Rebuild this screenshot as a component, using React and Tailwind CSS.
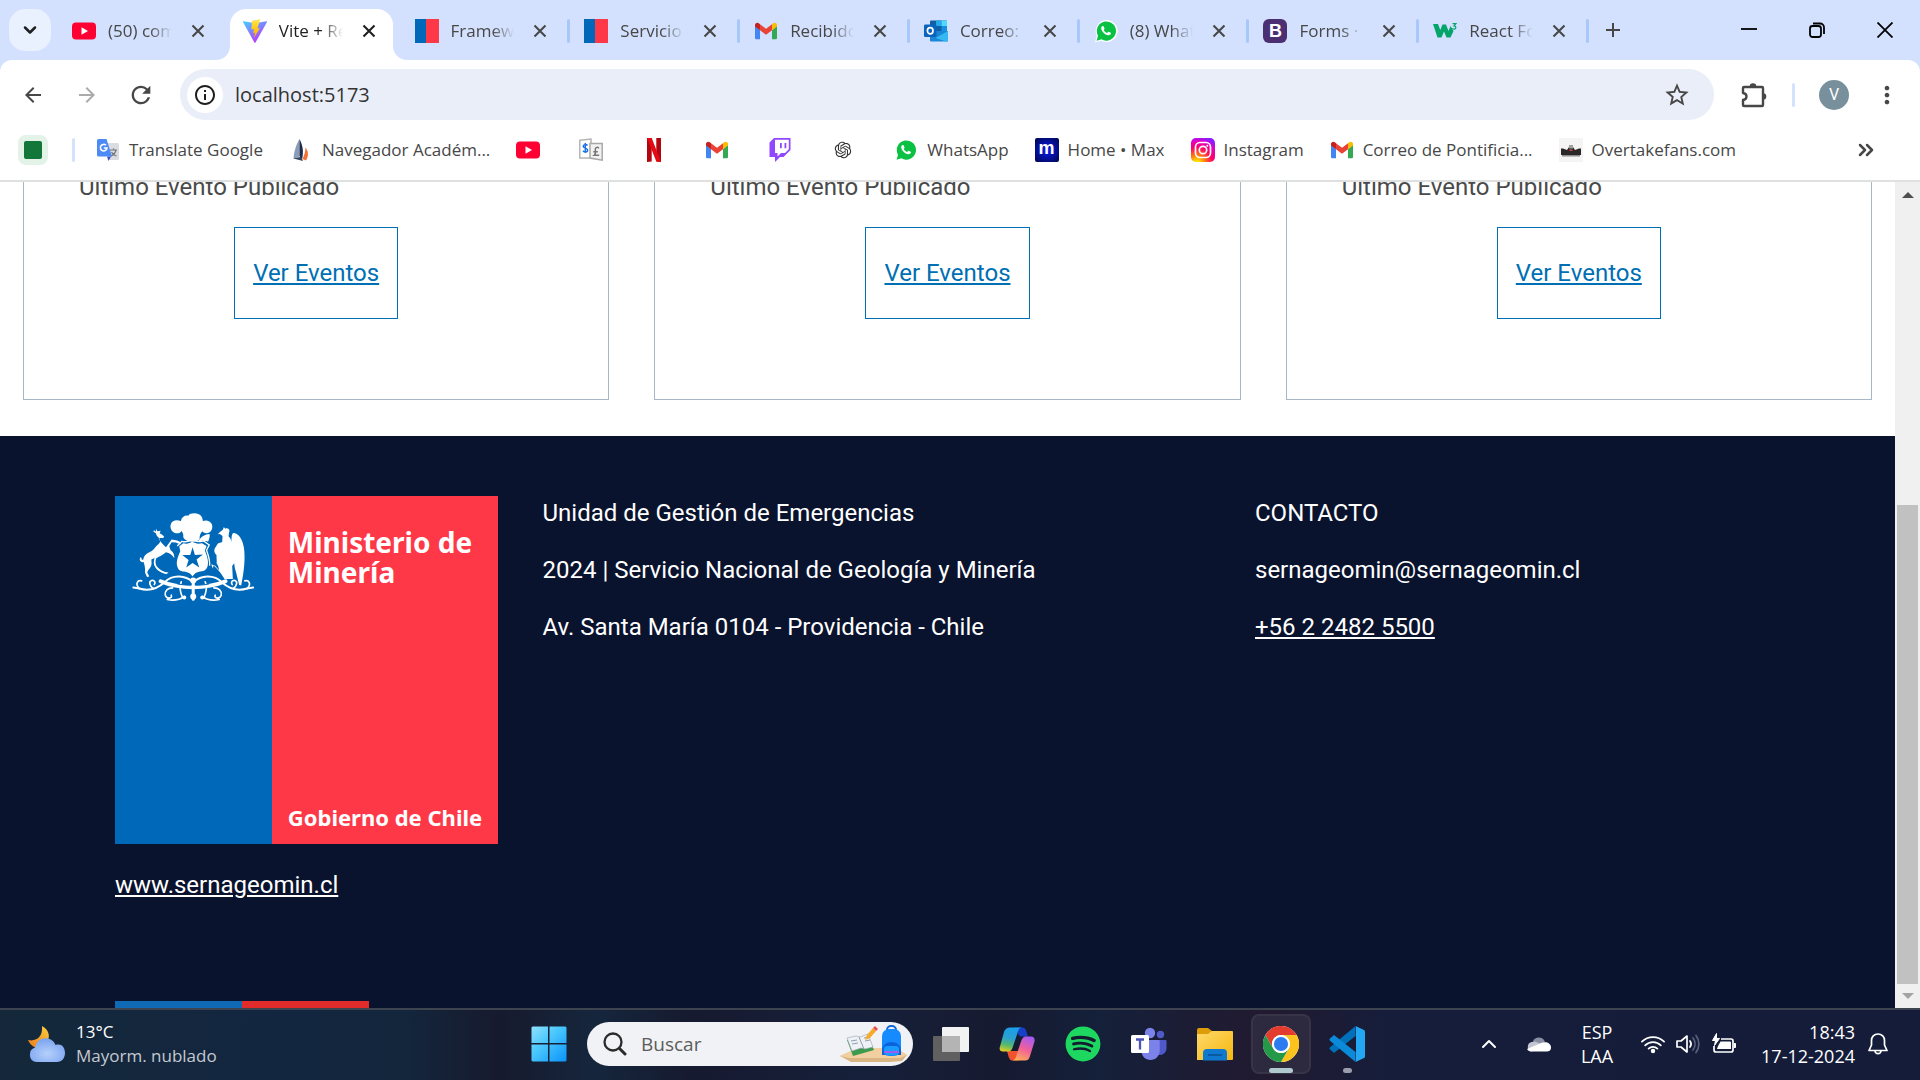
import React from "react";
import {
  MdAdd,
  MdArrowBack,
  MdArrowForward,
  MdInfoOutline,
  MdMoreVert,
  MdRefresh,
  MdStarBorder,
} from "react-icons/md";
import { FaSpotify } from "react-icons/fa";
import { RiOpenaiFill } from "react-icons/ri";
import { ChevronDown, ChevronUp, ChevronsRight } from "lucide-react";

/* ---------- site and bookmark icons ---------- */

const YouTubeIcon = () => (
  <svg viewBox="0 0 24 24" className="size-6">
    <rect x="0" y="3.5" width="24" height="17" rx="4" fill="#ff0033" />
    <path d="M9.5 8.3v7.4L16 12z" fill="#fff" />
  </svg>
);

const ViteIcon = () => (
  <svg viewBox="0 0 24 24" className="size-6">
    <defs>
      <linearGradient id="viteBody" x1="0" y1="0" x2="0.6" y2="1">
        <stop offset="0" stopColor="#41d1ff" />
        <stop offset="1" stopColor="#bd34fe" />
      </linearGradient>
      <linearGradient id="viteBolt" x1="0" y1="0" x2="0" y2="1">
        <stop offset="0" stopColor="#ffea83" />
        <stop offset="0.2" stopColor="#ffdd35" />
        <stop offset="1" stopColor="#ffa800" />
      </linearGradient>
    </defs>
    <path d="M23.9 3.2 12.5 23.6a.7.7 0 0 1-1.1 0L.1 3.2a.6.6 0 0 1 .7-.9L12 4.3l11.2-2a.6.6 0 0 1 .7.9z" fill="url(#viteBody)" />
    <path d="M17.3 0 9 1.7l-.6 8.8 2.5-.5-.7 4.2 1.8-.5-1 5.3 6-10-2.6.4L17.3 0z" fill="url(#viteBolt)" />
  </svg>
);

const GobIcon = () => (
  <svg viewBox="0 0 24 24" className="size-6">
    <path d="M0 0h11v24H0z" fill="#0068b8" />
    <path d="M11 0h13v24H11z" fill="#fe3847" />
  </svg>
);

const GmailIcon = () => (
  <svg viewBox="0 0 24 24" className="size-6">
    <path d="M1 6.5v12.5a1.3 1.3 0 0 0 1.3 1.3H6v-9z" fill="#4285f4" />
    <path d="M23 6.5v12.5a1.3 1.3 0 0 1-1.3 1.3H18v-9z" fill="#34a853" />
    <path d="M18 5.2v6.1l5-3.8V6c0-2-2.3-3-3.8-1.8z" fill="#fbbc04" />
    <path d="M6 11.3V5.2l6 4.5 6-4.5v6.1l-6 4.5z" fill="#ea4335" />
    <path d="M1 6v1.5l5 3.8V5.2L4.8 4.2C3.3 3 1 4 1 6z" fill="#c5221f" />
  </svg>
);

const OutlookIcon = () => (
  <svg viewBox="0 0 24 24" className="size-6">
    <path d="M7 1.5h15a1 1 0 0 1 1 1V13H6V2.5a1 1 0 0 1 1-1z" fill="#0f5ea8" />
    <path d="M12 1.5h5.5V7H12z" fill="#28a8ea" />
    <path d="M17.5 1.5H23V7h-5.5z" fill="#50d9ff" />
    <path d="M17.5 7H23v5h-5.5z" fill="#1490df" />
    <path d="M6 12h18v9.5a1 1 0 0 1-1 1H7a1 1 0 0 1-1-1z" fill="#1a86d6" />
    <path d="m24 12-12.5 7L22 22.5h1a1 1 0 0 0 1-1z" fill="#35b8f1" />
    <rect x="0" y="5.5" width="12.5" height="12.5" rx="1.2" fill="#0a64bd" />
    <ellipse cx="6.2" cy="11.8" rx="2.8" ry="3.1" fill="none" stroke="#fff" strokeWidth="1.7" />
  </svg>
);

const WhatsAppIcon = () => (
  <svg viewBox="0 0 24 24" className="size-6">
    <path d="M1 23.5 2.8 17A11 11 0 1 1 7.3 21.7z" fill="#fff" />
    <path d="M2.6 21.8 4 16.7A9.6 9.6 0 1 1 7.5 20.3z" fill="#0ac143" />
    <path d="M8.8 7c-.9 0-1.7 1.1-1.6 2.4.3 2.9 3.7 6.4 7 6.8 1.3.1 2.6-.7 2.7-1.7.1-.7-.1-.8-2.3-1.7-.7-.2-1 1.3-1.6 1.2-1.2-.4-2.7-1.7-3.3-3 .1-.5 1-.9.8-1.6C9.7 7.6 9.6 7 8.8 7z" fill="#fff" />
  </svg>
);

const BootstrapIcon = () => (
  <span className="flex size-6 items-center justify-center rounded-md bg-[#4c2f72] font-['Liberation_Sans',sans-serif] text-lg font-bold leading-none text-white">
    B
  </span>
);

const W3Icon = () => (
  <svg viewBox="0 0 24 24" className="size-6">
    <path d="M0 5h5l2.300 6L9.500 5.500h3.500l2.500 6.500L17.500 7l3 5-3 6.500h-4L11 12.500 8.500 18.500h-4z" fill="#04a46b" />
    <path d="M19.500 4.700h3.300l-1.800 2.200c2.500.1 2.400 3.300.2 3.300-.9 0-1.500-.4-1.700-1" fill="none" stroke="#04a46b" strokeWidth="1.2" />
  </svg>
);

const TranslateIcon = () => (
  <svg viewBox="0 0 24 24" className="size-6">
    <path d="M9 5h12.5A1.5 1.5 0 0 1 23 6.5v14a1.5 1.5 0 0 1-1.5 1.5H13z" fill="#dadce0" />
    <path d="M14 12h7M17.5 10.5V12M20 12c-.7 3-3 5-5 6M15.5 14c1 2 3 3.5 5 4" stroke="#70777f" strokeWidth="1.2" fill="none" />
    <path d="M11 18.5h4l-2.5 4.5z" fill="#3a4fc0" />
    <path d="M2.5 1h8L16 18.5H2.5A1.5 1.5 0 0 1 1 17V2.5A1.5 1.5 0 0 1 2.5 1z" fill="#4c8bf5" />
    <path d="M10 7.3A3.3 3.3 0 1 0 11 9.9H7.8" fill="none" stroke="#fff" strokeWidth="1.5" />
  </svg>
);

const NavegadorIcon = () => (
  <svg viewBox="0 0 24 24" className="size-6">
    <path d="M10.5 1v17.5L4.5 21C4.8 13 8 5 10.5 1z" fill="#8a9cb8" />
    <path d="M10.5 1c3 6 4.5 12 2.5 20.5L10.5 18z" fill="#1c2c4c" />
    <path d="M16.5 9.5c3 4 3.5 8 .5 13L13.5 21c2-4 2.8-7.5 3-11.5z" fill="#f0743a" />
    <path d="m4.5 20.5 7.5-1.7 2 4.2z" fill="#33435f" />
  </svg>
);

const CurrencyIcon = () => (
  <svg viewBox="0 0 24 24" className="size-6">
    <path d="M.8 2.3 12 1v19H.8z" fill="#fff" stroke="#b4b4b4" strokeWidth="1.5" />
    <path d="M11 5.5h12.2v16.7L11 20z" fill="#f2f2f2" stroke="#a8a8a8" strokeWidth="1.5" />
    <path d="M8.5 7.5C7.3 6 4.2 6.4 4.2 8.3c0 2.3 4.5 1.4 4.5 3.9 0 2-3.4 2.4-4.8.6M6.3 5v10" fill="none" stroke="#1a73e8" strokeWidth="1.5" />
    <path d="M19.8 10.3c-1-1.6-3.7-1-3.5 1 .2 2.2.8 4.5-1.1 6h5M14.3 13.7h4.5" fill="none" stroke="#777" strokeWidth="1.5" />
  </svg>
);

const NetflixIcon = () => (
  <svg viewBox="0 0 24 24" className="size-6">
    <path d="M5 0h4.7v23.5L5 24zM14.3 0H19v24l-4.7-.5z" fill="#b1060f" />
    <path d="M5 0h4.7L19 24l-4.7-.5z" fill="#e50914" />
  </svg>
);

const TwitchIcon = () => (
  <svg viewBox="0 0 24 24" className="size-6">
    <path d="M6 0 1.5 4.5V19H7v5l5-5h3.5l7-7V0z" fill="#9146ff" />
    <path d="M7 1.7h13.8v9.5L17 15h-4l-3.5 3.5V15H7z" fill="#fff" />
    <path d="M12 5h1.8v5.2H12zM16.5 5h1.8v5.2h-1.8z" fill="#9146ff" />
  </svg>
);

const MaxIcon = () => (
  <span className="flex size-6 items-center justify-center rounded-xs bg-[radial-gradient(#0a1cf0,#00064a)] pb-1 font-['Liberation_Sans',sans-serif] text-lg font-bold leading-none text-white">
    m
  </span>
);

const InstagramIcon = () => (
  <svg viewBox="0 0 24 24" className="size-6">
    <defs>
      <radialGradient id="insta" cx="0.25" cy="1.05" r="1.1">
        <stop offset="0.1" stopColor="#ffdd00" />
        <stop offset="0.35" stopColor="#ff6a1a" />
        <stop offset="0.6" stopColor="#ff0069" />
        <stop offset="0.85" stopColor="#e000c8" />
        <stop offset="1" stopColor="#8a1cff" />
      </radialGradient>
    </defs>
    <rect width="24" height="24" rx="5" fill="url(#insta)" />
    <rect x="4.5" y="4.5" width="15" height="15" rx="4.5" fill="none" stroke="#fff" strokeWidth="1.7" />
    <circle cx="12" cy="12" r="3.7" fill="none" stroke="#fff" strokeWidth="1.7" />
    <circle cx="16.3" cy="7.7" r="1" fill="#fff" />
  </svg>
);

const OvertakeIcon = () => (
  <svg viewBox="0 0 24 24" className="size-6">
    <path d="M0 0h24v24H0z" fill="#f4f4f4" />
    <path d="M2 10.5h2l4 1.5 2-3h4l2 3 4-1.5h2V17H2z" fill="#2b2728" />
    <path d="M10 7h4v3.5h-4z" fill="#a19fa0" />
    <path d="M3 17h18v1.5H3z" fill="#8d8a8b" />
    <path d="M10.5 11.5h3V13h-3z" fill="#d2453f" />
  </svg>
);

const ExtensionIcon = () => (
  <svg viewBox="0 0 28 28" className="size-7">
    <path
      d="M4 6h18a1 1 0 0 1 1 1v17a1 1 0 0 1-1 1H4a1 1 0 0 1-1-1v-5c2.500-.3 3.500-1.800 3.500-3.500S5.500 12.300 3 12V7a1 1 0 0 1 1-1z"
      fill="none"
      stroke="#474747"
      strokeWidth="2.4"
      strokeLinejoin="round"
    />
    <path d="M9.700 5.500a3.300 3.300 0 0 1 6.600 0zM23 12.200a3.300 3.300 0 0 1 0 6.600z" fill="#474747" />
  </svg>
);

/* ---------- browser chrome ---------- */

const tabs = [
  { icon: <YouTubeIcon />, title: "(50) comu", kind: "first" },
  { icon: <ViteIcon />, title: "Vite + Re", kind: "active" },
  { icon: <GobIcon />, title: "Framewo", kind: "plain" },
  { icon: <GobIcon />, title: "Servicio", kind: "plain", sep: true },
  { icon: <GmailIcon />, title: "Recibido", kind: "plain", sep: true },
  { icon: <OutlookIcon />, title: "Correo:", kind: "plain", sep: true },
  { icon: <WhatsAppIcon />, title: "(8) What", kind: "plain", sep: true },
  { icon: <BootstrapIcon />, title: "Forms ·", kind: "plain", sep: true },
  { icon: <W3Icon />, title: "React Fo", kind: "plain", sep: true },
];

const tabStyles = {
  first: "relative flex min-w-0 flex-1 items-center pb-2 pl-3 pr-[22px] text-[#474747]",
  active: "relative flex min-w-0 flex-1 items-center pb-2 pl-[13px] pr-5 text-[#1f1f1f]",
  plain: "relative flex min-w-0 flex-1 items-center pb-2 pl-4 pr-[18px] text-[#474747]",
};

function Tab({ icon, title, kind, sep }) {
  return (
    <li className={tabStyles[kind]}>
      {sep && <span className="absolute -left-px top-[10px] h-6 w-[3px] rounded-full bg-[#a8c7fa]" />}
      {kind === "active" && (
        <span className="absolute inset-y-0 left-0 right-[6px] rounded-t-2xl bg-white">
          <svg viewBox="0 0 14 14" className="absolute bottom-0 right-full size-[14px]">
            <path d="M14 0v14H0A14 14 0 0 0 14 0z" fill="#fff" />
          </svg>
          <svg viewBox="0 0 14 14" className="absolute bottom-0 left-full size-[14px]">
            <path d="M0 0v14h14A14 14 0 0 1 0 0z" fill="#fff" />
          </svg>
        </span>
      )}
      <span className="relative shrink-0">{icon}</span>
      <span className="relative ml-3 min-w-0 flex-1 overflow-hidden whitespace-nowrap text-[17px] leading-6 [mask-image:linear-gradient(to_right,#000_65%,transparent)]">
        {title}
      </span>
      <button aria-label={"Cerrar " + title} className="relative ml-4 shrink-0">
        <svg viewBox="0 0 20 20" className="size-5">
          <path d="m4.500 4.500 11 11m0-11-11 11" stroke="currentColor" strokeWidth="2.1" />
        </svg>
      </button>
    </li>
  );
}

function TabStrip() {
  return (
    <header className="flex h-[60px] shrink-0 items-stretch bg-[#d3e1fe] pt-[9px]">
      <button aria-label="Buscar pestañas" className="ml-[9px] mr-[9px] flex h-[42px] w-[42px] items-center justify-center rounded-2xl bg-[#e9f0fe]">
        <ChevronDown className="size-5 text-[#1f1f1f]" strokeWidth={3} />
      </button>
      <ul className="flex min-w-0 flex-1">
        {tabs.map((t) => (
          <Tab key={t.title} {...t} />
        ))}
      </ul>
      <div className="relative flex w-[333px] shrink-0 items-start pl-[14px] pr-[27px]">
        <span className="absolute -left-px top-[10px] h-6 w-[3px] rounded-full bg-[#a8c7fa]" />
        <button aria-label="Nueva pestaña" className="mt-[9px]">
          <MdAdd className="size-6 text-[#474747]" />
        </button>
        <div className="ml-auto mt-[13px] flex gap-[52px]">
          <button aria-label="Minimizar">
            <svg viewBox="0 0 16 16" className="size-4">
              <path d="M0 7h16" stroke="#000" strokeWidth="1.8" />
            </svg>
          </button>
          <button aria-label="Restaurar">
            <svg viewBox="0 0 16 16" className="size-4" fill="none" stroke="#000" strokeWidth="1.8">
              <rect x="1" y="4" width="11" height="11" rx="2.5" />
              <path d="M4 1.5h7a4 4 0 0 1 4 4V12" />
            </svg>
          </button>
          <button aria-label="Cerrar">
            <svg viewBox="0 0 16 16" className="size-4">
              <path d="m.5.5 15 15m0-15-15 15" stroke="#000" strokeWidth="1.8" />
            </svg>
          </button>
        </div>
      </div>
    </header>
  );
}

function Toolbar() {
  return (
    <div className="shrink-0 bg-[#d3e1fe]">
      <div className="flex h-[60px] items-center rounded-t-xl bg-white pt-[9px]">
        <button aria-label="Atrás" className="ml-[21px]">
          <MdArrowBack className="size-6 text-[#474747]" />
        </button>
        <button aria-label="Adelante" className="ml-[30px]">
          <MdArrowForward className="size-6 text-[#ababab]" />
        </button>
        <button aria-label="Volver a cargar" className="ml-7">
          <MdRefresh className="size-7 text-[#474747]" />
        </button>
        <div className="ml-[25px] flex h-[51px] min-w-0 flex-1 items-center rounded-full bg-[#eaeef8]">
          <button aria-label="Información del sitio" className="ml-[7px] flex size-9 items-center justify-center rounded-full bg-white">
            <MdInfoOutline className="size-6 text-[#1f1f1f]" />
          </button>
          <input aria-label="Dirección" defaultValue="localhost:5173" className="ml-3 min-w-0 flex-1 bg-transparent text-xl text-[#333] outline-none" />
          <button aria-label="Añadir a marcadores" className="mr-[23px]">
            <MdStarBorder className="size-7 text-[#474747]" />
          </button>
        </div>
        <button aria-label="Extensiones" className="ml-[26px]">
          <ExtensionIcon />
        </button>
        <span className="ml-6 h-6 w-[3px] rounded-full bg-[#d3e3fd]" />
        <button aria-label="Perfil" className="ml-6 flex size-[30px] items-center justify-center rounded-full bg-[#78909c] font-['Roboto',sans-serif] text-base text-white">
          V
        </button>
        <button aria-label="Menú" className="ml-[26px] mr-[21px]">
          <MdMoreVert className="-mx-0.5 size-7 text-[#474747]" />
        </button>
      </div>
    </div>
  );
}

const bookmarks = [
  { icon: <TranslateIcon />, label: "Translate Google" },
  { icon: <NavegadorIcon />, label: "Navegador Académ..." },
  { icon: <YouTubeIcon />, name: "YouTube" },
  { icon: <CurrencyIcon />, name: "Divisas" },
  { icon: <NetflixIcon />, name: "Netflix" },
  { icon: <GmailIcon />, name: "Gmail" },
  { icon: <TwitchIcon />, name: "Twitch" },
  { icon: <RiOpenaiFill className="mx-[2px] size-5 text-[#333]" />, name: "ChatGPT" },
  { icon: <WhatsAppIcon />, label: "WhatsApp" },
  { icon: <MaxIcon />, label: "Home • Max" },
  { icon: <InstagramIcon />, label: "Instagram" },
  { icon: <GmailIcon />, label: "Correo de Pontificia..." },
  { icon: <OvertakeIcon />, label: "Overtakefans.com" },
];

function BookmarksBar() {
  return (
    <nav className="flex h-[62px] shrink-0 items-center border-b-2 border-[#dfe1e0] bg-white">
      <button aria-label="Grupo de pestañas" className="ml-[18px] flex size-[30px] items-center justify-center rounded-lg bg-[#e4f3e8]">
        <span className="size-[18px] rounded-xs bg-[#13773a]" />
      </button>
      <span className="ml-6 h-6 w-[3px] rounded-full bg-[#d3e3fd]" />
      <ul className="ml-[21px] flex min-w-0 flex-1 items-center">
        {bookmarks.map((b, i) => (
          <li key={i} className="shrink-0">
            <a href="#" aria-label={b.label || b.name} className={b.label ? "mr-[26px] flex items-center gap-[9px] text-[17px] leading-6 text-[#474747]" : "mr-[39px] flex items-center"}>
              {b.icon}
              {b.label && <span>{b.label}</span>}
            </a>
          </li>
        ))}
      </ul>
      <button aria-label="Más marcadores" className="mr-[42px]">
        <ChevronsRight className="size-6 text-[#474747]" strokeWidth={2.5} />
      </button>
    </nav>
  );
}

/* ---------- page ---------- */

function EventCard() {
  return (
    <article className="border border-t-0 border-[#a8b7c7] pb-[80px]">
      <p className="px-[55px] leading-9 text-[#4a4a4a]">Último Evento Publicado</p>
      <a href="#" className="mx-auto mt-[22px] flex h-[92px] w-fit items-center border border-[#006fb3] px-[18px] text-[#006fb3] underline">
        Ver Eventos
      </a>
    </article>
  );
}

const CoatOfArms = () => (
  <svg viewBox="0 0 390 300" className="w-full" role="img" aria-label="Escudo de Chile">
    <g fill="#fff">
      {/* plume */}
      <path d="M160 88c1-9-1-13-5-19-4 7-14 9-22 5-9-4-14-16-10-26 4-11 16-14 30-9 2-11 10-17 22-16 5-8 22-9 32-4 9 4 11 12 12 20 10-4 23 0 27 10 4 11-1 23-12 26-8 2-14-1-17-5-6 7-8 13-8 24-8 12-42 10-49-6z" />
      {/* huemul */}
      <path d="M66 68l5 4 1-6 5 5 2-9 3 8 10-2-3 8c6 3 10 6 14 11-5 6-12 2-17 4 4 10 14 20 22 27l17-23 17 3 12 6-3 5-14-5-12-1-7 12 4 12c7 4 12 12 11 24-6-10-14-16-25-18-8 8-22 14-29 18-4 9-3 19 3 26 8 9 19 15 34 17l-7 5c-18-4-32-14-37-29-1-8 0-15 2-20l-10 5c1 10 2 17-3 24-5 6-8 10-9 15l6 12-7 1-6-13c1-9 0-20-4-32-8 3-15-5-10-14l4 2c-1 5 1 7 5 5 1-12 12-20 24-25 9-6 13-15 22-22 5-4 6-10 2-17-6-4-10-11-10-15z" />
      {/* condor */}
      <path d="M264 79c4-7 10-10 15-14l3-8 4 5c5-3 12-1 13 6-2 6-2 11-3 17 5 5 8 10 8 17 2-10 0-21 6-27 17 0 28 20 32 43 5 32 1 70-8 115l-6-2c-4-15-7-32-13-50l-2-15-6 8 2 39h-25c-9-15-18-27-28-36l-5-5-2 10-5-12c5 0 13 2 16 9l8 8-3-12-5-10c2-7-1-16 0-24-6-4-9-12-5-20l9-14 13-5 1-18-8-6z" />
      <path d="M205 100c8-13 17-20 34-22 2 6-1 15-4 23-10-3-19-4-30-1z" />
      {/* shield */}
      <path d="M148 115l12-9c10 3 19 1 27-5 9 6 18 8 29 5l14 8-5 14c7 18 12 32 8 48-6 17-19 13-30 17-9 3-12 8-15 13-4-6-7-11-17-13-12-3-24 0-29-17-4-16 2-30 9-46z" />
    </g>
    <path d="M142 114l14-14c12 4 22 0 31-7 11 8 22 10 34 6l17 12-8 16c8 22 11 33 9 46" fill="none" stroke="#fff" strokeWidth="4" />
    <path d="M188 118l7 23 24-1-19 15 8 24-20-14-19 14 7-23-19-15 24 0z" fill="#0068b8" />
    {/* ribbon and scrolls */}
    <g fill="none" stroke="#fff" strokeLinecap="round" strokeLinejoin="round">
      <path d="M92 220c32 14 66 18 97 18s65-4 98-18" strokeWidth="12" />
      <path d="M188 222c-20-20-60-24-84 1-20 18-44 29-76 19l-18-3M192 222c20-20 60-24 84 1 20 18 44 29 76 19l18-3" strokeWidth="6" />
      <path d="M28 242c-14-14-5-26 7-23M352 242c14-14 5-26-7-23M70 242c-12-8-14-21-5-24 8-2 13 6 8 12M310 242c12-8 14-21 5-24-8-2-13 6-8 12" strokeWidth="5" />
      <path d="M128 240c-15 0-24 8-22 22 5 13 22 10 18 0M252 240c15 0 24 8 22 22-5 13-22 10-18 0M112 275c22 5 40-1 52-9M268 275c-22 5-40-1-52-9M154 222c-7 16-3 32 4 47M226 222c7 16 3 32-4 47" strokeWidth="5" />
      <path d="M190 220v54" strokeWidth="9" />
    </g>
    <path d="M142 228c15 3 30 4 42 4M196 232c15 0 30-1 42-4" fill="none" stroke="#0068b8" strokeWidth="3" />
    <g fill="#fff">
      <circle cx="190" cy="218" r="9" />
      <circle cx="190" cy="266" r="9" />
      <circle cx="163" cy="269" r="6" />
      <circle cx="217" cy="269" r="6" />
    </g>
  </svg>
);

function MinistryLogo() {
  return (
    <a href="#" className="flex aspect-[383/348] w-full bg-[#fe3847] font-['Noto_Sans',sans-serif] font-bold text-white no-underline">
      <span className="w-[41%] shrink-0 bg-[#0068b8] pl-[15px] pr-3 pt-3">
        <CoatOfArms />
      </span>
      <span className="flex flex-1 flex-col justify-between whitespace-nowrap pb-3 pl-4 pt-[31px]">
        <span className="text-[28px] leading-[30px]">
          Ministerio de
          <br />
          Minería
        </span>
        <span className="text-[22px] leading-[30px]">Gobierno de Chile</span>
      </span>
    </a>
  );
}

function Footer() {
  return (
    <footer className="bg-[#0a132d] px-[115px] pt-[60px] text-white">
      <div className="grid grid-cols-12 gap-x-[45px]">
        <div className="col-span-3">
          <MinistryLogo />
          <a href="#" className="mt-[23px] block w-fit leading-9 underline">
            www.sernageomin.cl
          </a>
        </div>
        <div className="col-span-5 -mt-px flex flex-col gap-[21px] leading-9">
          <p>Unidad de Gestión de Emergencias</p>
          <p>2024 | Servicio Nacional de Geología y Minería</p>
          <p>Av. Santa María 0104 - Providencia - Chile</p>
        </div>
        <div className="col-span-4 -mt-px flex flex-col gap-[21px] leading-9">
          <p>CONTACTO</p>
          <p>sernageomin@sernageomin.cl</p>
          <a href="#" className="w-fit underline">
            +56 2 2482 5500
          </a>
        </div>
      </div>
      <div className="mt-[98px] flex h-10 w-[254px]">
        <span className="flex-1 bg-[#0f69b4]" />
        <span className="flex-1 bg-[#e22c2c]" />
      </div>
    </footer>
  );
}

function Scrollbar() {
  return (
    <div className="flex w-[25px] shrink-0 flex-col items-center bg-[#f0f0f0] pb-[9px] pt-[10px]">
      <svg viewBox="0 0 12 6" className="h-[6px] w-3">
        <path d="M0 6 6 0l6 6z" fill="#505050" />
      </svg>
      <div className="flex w-full flex-1 flex-col justify-end pb-[9px]">
        <div className="mx-auto h-[61%] w-[21px] bg-[#c1c1c1]" />
      </div>
      <svg viewBox="0 0 12 6" className="h-[6px] w-3">
        <path d="M0 0h12L6 6z" fill="#a3a3a3" />
      </svg>
    </div>
  );
}

/* ---------- taskbar ---------- */

const WeatherIcon = () => (
  <svg viewBox="0 0 37 36" className="h-9 w-[37px]">
    <defs>
      <linearGradient id="moon" x1="0.8" y1="0" x2="0" y2="1">
        <stop offset="0" stopColor="#fbc93d" />
        <stop offset="1" stopColor="#ee7a1b" />
      </linearGradient>
      <radialGradient id="cloud" cx="0.5" cy="0.65" r="0.6">
        <stop offset="0" stopColor="#b5d0fb" />
        <stop offset="1" stopColor="#7ea6f0" />
      </radialGradient>
    </defs>
    <path d="M14 0c8 4 9 13 3 18S4 23 0 14c9 2 15-4 14-14z" fill="url(#moon)" />
    <path d="M8 36a7.5 7.5 0 0 1-1-14.5C9 10 24 9 27.5 19 35 17 37 23 37 27c0 5-3 9-8 9z" fill="url(#cloud)" />
  </svg>
);

const StartIcon = () => (
  <svg viewBox="0 0 36 36" className="size-9">
    <defs>
      <linearGradient id="win" x1="0" y1="0" x2="1" y2="1">
        <stop offset="0" stopColor="#8fe1ff" />
        <stop offset="0.4" stopColor="#4cc9fc" />
        <stop offset="1" stopColor="#0a93fb" />
      </linearGradient>
    </defs>
    <path d="M1.5.5H17V17H.5V1.500zM18.500.5h16l1 1V17h-17zM.5 18.500H17v17H1.500l-1-1zM18.500 18.500h17v16l-1 1h-16z" fill="url(#win)" />
  </svg>
);

const SchoolIcon = () => (
  <svg viewBox="0 0 68 38" className="h-[38px] w-[68px]">
    <path d="M1 31l18-8h38l11 7-5 6-12 1H12z" fill="#d9b583" />
    <path d="M1 31l18-8h38l11 7-7 3H10z" fill="#f2cfa0" />
    <path d="M8 15l21-4 6 14-21 6z" fill="#3b9a4c" />
    <path d="M8 13l9-2 4 1 8-3 5 13-8 2-4-1-9 3z" fill="#eef1f5" stroke="#9aa3b5" strokeWidth=".6" />
    <path d="M20 12l5 12M12 16l6-1M13 19l6-1M25 13l5-1M26 16l5-1" stroke="#7d879b" strokeWidth=".8" />
    <path d="M26 15l2-5 6-7 3 3-6 7z" fill="#f7a928" />
    <path d="M34 3l2-2 3 3-2 2z" fill="#ee4a54" />
    <rect x="48" y="1" width="9" height="8" rx="4" fill="none" stroke="#1267d6" strokeWidth="2" />
    <rect x="43" y="4" width="19" height="27" rx="7" fill="#168bff" />
    <path d="M43 26c0-12 19-12 19 0v4H43z" fill="#0b63dc" />
    <rect x="45" y="21" width="15" height="9" rx="3" fill="#1a9bff" />
    <path d="M45 26h15v2H45z" fill="#a05cf0" />
  </svg>
);

const TaskViewIcon = () => (
  <svg viewBox="0 0 36 36" className="size-9">
    <rect x="9" y="1" width="27" height="25" rx="1" fill="#f2f2f2" />
    <rect x="0" y="10" width="27" height="25" rx="1" fill="#606060" />
    <path d="M9 10h18v16H9z" fill="#b4b4b4" />
  </svg>
);

const CopilotIcon = () => (
  <svg viewBox="0 0 36 36" className="size-9">
    <defs>
      <linearGradient id="copA" x1="0.3" y1="0" x2="0.1" y2="1">
        <stop offset="0" stopColor="#1a9fe8" />
        <stop offset="0.4" stopColor="#2aa0d0" />
        <stop offset="0.7" stopColor="#56b96a" />
        <stop offset="1" stopColor="#f3cf1d" />
      </linearGradient>
      <linearGradient id="copB" x1="0.7" y1="0" x2="0.3" y2="1">
        <stop offset="0" stopColor="#a45cf0" />
        <stop offset="0.5" stopColor="#f0609a" />
        <stop offset="1" stopColor="#fdab5a" />
      </linearGradient>
    </defs>
    <path d="M16 1.500h7c3 0 4 2 5 6l1 3h-7c-3 0-6-9-6-9z" fill="#1740c8" />
    <path d="M8 25h12v9.500h-6c-3 0-4-2-5-6z" fill="#f0532d" />
    <path d="M11 1.500h12c-3 0-4 3-5 7l-4 12c-1 3-2 5-5 5H4c-3 0-4-2-3-5L5 6c1-3 3-4.500 6-4.500z" fill="url(#copA)" />
    <path d="M26 34.500H13c3 0 4-3 5-7l4-12c1-3 2-5 5-5h5c3 0 4 2 3.500 5L31 30c-1 3-2 4.500-5 4.500z" fill="url(#copB)" />
  </svg>
);

const SpotifyIcon = () => (
  <span className="block size-9 rounded-full bg-[#141c30]">
    <FaSpotify className="size-9 text-[#1ed760]" />
  </span>
);

const TeamsIcon = () => (
  <svg viewBox="0 0 36 36" className="size-9">
    <circle cx="29.5" cy="8.5" r="3.7" fill="#5059c9" />
    <path d="M26 14h8.500a1 1 0 0 1 1 1v7c0 4-3 7-6.500 7h-3z" fill="#5059c9" />
    <circle cx="19" cy="7" r="5.2" fill="#7b83eb" />
    <path d="M12 14h15.500a1.200 1.200 0 0 1 1.200 1.200V24c0 6-4 10-9.200 10s-9-4-9-9z" fill="#7b83eb" />
    <rect x="0" y="9" width="18" height="18" rx="1.5" fill="#fff" />
    <path d="M5 13.500h8M9 13.500v10" stroke="#4b53bc" strokeWidth="2.3" fill="none" />
  </svg>
);

const ExplorerIcon = () => (
  <svg viewBox="0 0 36 36" className="size-9">
    <defs>
      <linearGradient id="folder" x1="0" y1="0" x2="1" y2="1">
        <stop offset="0" stopColor="#ffd96b" />
        <stop offset="1" stopColor="#f6b70e" />
      </linearGradient>
    </defs>
    <path d="M0 4a2 2 0 0 1 2-2h9l4 3v6H0z" fill="#dc9d08" />
    <path d="M0 8h11l4-3h20a1 1 0 0 1 1 1v27a1 1 0 0 1-1 1H0z" fill="url(#folder)" />
    <path d="M6 34.500V27a4 4 0 0 1 4-4h16a4 4 0 0 1 4 4v7.500z" fill="#0f78cf" />
    <path d="M11 29h14" stroke="#0b4f91" strokeWidth="1.5" />
  </svg>
);

const ChromeIcon = () => (
  <svg viewBox="0 0 48 48" className="size-9">
    <circle cx="24" cy="24" r="24" fill="#fff" />
    <path d="M3.200 12a24 24 0 0 1 41.600 0H24a12 12 0 0 0-10.400 18z" fill="#e33b2e" />
    <path d="M44.800 12A24 24 0 0 1 24 48l10.400-18A12 12 0 0 0 24 12z" fill="#fcc31e" />
    <path d="M24 48A24 24 0 0 1 3.200 12l10.400 18A12 12 0 0 0 34.400 30z" fill="#249a48" />
    <circle cx="24" cy="24" r="12" fill="#fff" />
    <circle cx="24" cy="24" r="9.4" fill="#2c7bf0" />
  </svg>
);

const VsCodeIcon = () => (
  <svg viewBox="0 0 36 36" className="size-9">
    <path d="M26.500 0v10L5 27l-4-3.500a1.500 1.500 0 0 1 0-2.200z" fill="#0070b8" />
    <path d="M26.500 36V26L5 9l-4 3.500a1.500 1.500 0 0 0 0 2.200z" fill="#0a8ad8" />
    <path d="m26.500 0 8 3.800a2 2 0 0 1 1.500 2v24.400a2 2 0 0 1-1.500 2l-8 3.800c.5-.5.500-1 .500-2V2c0-1 0-1.500-.5-2z" fill="#24a7f2" />
  </svg>
);

const apps = [
  { name: "Vista de tareas", icon: <TaskViewIcon /> },
  { name: "Copilot", icon: <CopilotIcon /> },
  { name: "Spotify", icon: <SpotifyIcon /> },
  { name: "Teams", icon: <TeamsIcon /> },
  { name: "Explorador", icon: <ExplorerIcon /> },
  { name: "Chrome", icon: <ChromeIcon />, active: true },
  { name: "VS Code", icon: <VsCodeIcon />, running: true },
];

function Taskbar() {
  return (
    <div className="grid h-[72px] shrink-0 grid-cols-[1fr_auto_1fr] items-center border-t-2 border-[#3d4450] bg-[linear-gradient(to_right,#14283a_0%,#132640_14%,#13263c_21%,#171a2e_26%,#15263c_31%,#161a30_36%,#16203a_45%,#161a30_52%,#14203a_57%,#221a30_66%,#161d3a_72%,#141c3a_100%)] pb-[2px] text-white">
      <button className="flex w-fit items-center gap-[11px] pl-7 text-left text-[17px] leading-6">
        <WeatherIcon />
        <span>
          <span className="block">13°C</span>
          <span className="block text-[#c4c9d0]">Mayorm. nublado</span>
        </span>
      </button>
      <div className="mr-6 flex items-center gap-[6px]">
        <button aria-label="Inicio" className="flex size-[60px] items-center justify-center">
          <StartIcon />
        </button>
        <label className="mx-[2px] flex h-11 w-[326px] items-center rounded-full bg-[#f1f2f5] pl-4 pr-[6px]">
          <svg viewBox="0 0 24 24" className="size-6 shrink-0" fill="none" stroke="#2b2b2b" strokeLinecap="round">
            <circle cx="10" cy="10" r="8.5" strokeWidth="2.3" />
            <path d="m16.5 16.5 5.5 5.5" strokeWidth="3" />
          </svg>
          <input aria-label="Buscar" placeholder="Buscar" className="ml-[14px] min-w-0 flex-1 bg-transparent text-[19px] outline-none placeholder:text-[#5c5c5c]" />
          <SchoolIcon />
        </label>
        {apps.map((a) => (
          <button key={a.name} aria-label={a.name} className={a.active ? "relative flex size-[60px] items-center justify-center rounded-lg border-2 border-[#373448] bg-[#2d2a3f]" : "relative flex size-[60px] items-center justify-center"}>
            {a.icon}
            {a.active && <span className="absolute -bottom-px h-[5px] w-6 rounded-full bg-[#b0c9cf]" />}
            {a.running && <span className="absolute bottom-px h-[5px] w-[9px] rounded-full bg-[#9a9cab]" />}
          </button>
        ))}
      </div>
      <div className="flex items-center justify-end pr-8 text-lg leading-6">
        <button aria-label="Iconos ocultos" className="mr-[26px]">
          <ChevronUp className="size-6" strokeWidth={2} />
        </button>
        <svg viewBox="0 0 24 16" className="mr-[30px] h-4 w-6">
          <path d="M6 5a6.5 6.5 0 0 1 12 1l-6 5z" fill="#8b8fa3" />
          <path d="M4 15.500A5 5 0 0 1 4.500 6c3-1.500 6 0 8 1.500L17 11z" fill="#c3c6d2" />
          <path d="M4 15.500c-2 0-3-1-4-2.500L14 7c5-2 10 0 10 4.500 0 3-2 4-4.500 4z" fill="#fff" />
        </svg>
        <button className="mr-[28px] text-center">
          ESP
          <br />
          LAA
        </button>
        <button aria-label="Red, volumen y batería" className="mr-[24px] flex items-center gap-[11px]">
          <svg viewBox="0 0 26 20" className="h-5 w-6" fill="none" stroke="#fff" strokeWidth="1.8" strokeLinecap="round">
            <path d="M1 7.500a17 17 0 0 1 24 0M4.500 11.500a12 12 0 0 1 17 0M8.200 15a7 7 0 0 1 9.600 0" />
            <circle cx="13" cy="17.5" r="1.5" fill="#fff" />
          </svg>
          <svg viewBox="0 0 25 20" className="h-5 w-[25px]" fill="none" stroke="#fff" strokeWidth="1.7" strokeLinecap="round" strokeLinejoin="round">
            <path d="M1 7v6h4l6 5V2L5 7zM14 7a5 5 0 0 1 0 6" />
            <path d="M17 4a10 10 0 0 1 0 12M20 1.500a14 14 0 0 1 0 17" stroke="#5b617a" />
          </svg>
          <svg viewBox="0 0 25 22" className="h-[22px] w-[25px]" fill="none" stroke="#fff" strokeWidth="1.7" strokeLinejoin="round">
            <path d="M9 6h10a2 2 0 0 1 2 2v9a2 2 0 0 1-2 2H4a2 2 0 0 1-2-2v-4" />
            <path d="M8.500 8.500H18a1 1 0 0 1 1 1V16H5l1-3z" fill="#fff" stroke="none" />
            <path d="M22 10.500h1.500v4H22M4.500.5.5 7.500h3l-1 5 5-7H4.500z" fill="#fff" strokeWidth="1" />
          </svg>
        </button>
        <button className="mr-[13px] text-right">
          18:43
          <br />
          17-12-2024
        </button>
        <button aria-label="Notificaciones">
          <svg viewBox="0 0 20 22" className="h-[22px] w-5" fill="none" stroke="#fff" strokeWidth="1.7" strokeLinejoin="round">
            <path d="M10 1c-4 0-6.500 3-6.500 6.500V12L1 17.500h18L16.500 12V7.500C16.500 4 14 1 10 1zM7 18c.5 3.500 5.500 3.500 6 0" />
          </svg>
        </button>
      </div>
    </div>
  );
}

export default function App() {
  return (
    <div className="flex h-screen flex-col overflow-hidden bg-white font-['Open_Sans','Noto_Sans',sans-serif]">
      <TabStrip />
      <Toolbar />
      <BookmarksBar />
      <div className="flex min-h-0 flex-1">
        <main className="min-w-0 flex-1 overflow-hidden bg-white font-['Roboto',sans-serif] text-2xl">
          <section className="-mt-[13px] grid grid-cols-3 gap-[45px] px-[23px] pb-9">
            <EventCard />
            <EventCard />
            <EventCard />
          </section>
          <Footer />
        </main>
        <Scrollbar />
      </div>
      <Taskbar />
    </div>
  );
}
